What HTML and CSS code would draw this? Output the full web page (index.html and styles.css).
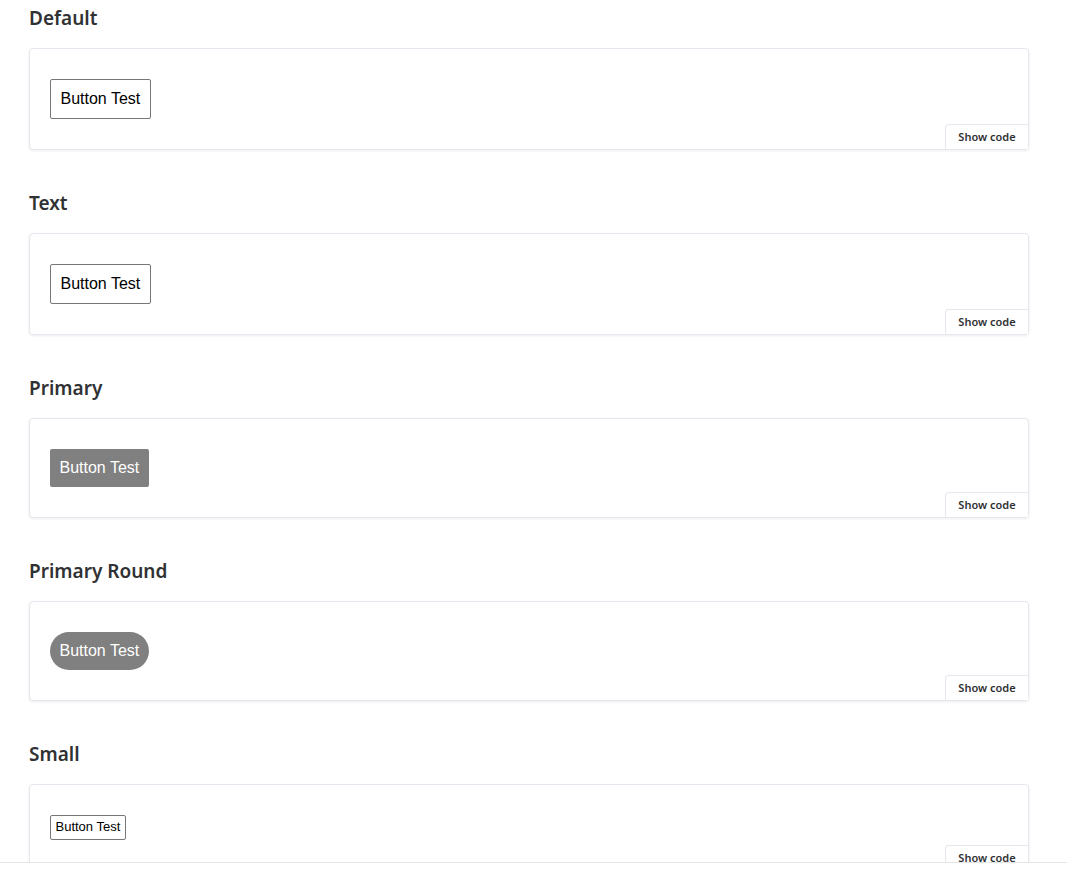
FILE: index.html
```html
<!DOCTYPE html>
<html lang="en">
<head>
<meta charset="utf-8">
<title>Buttons</title>
<link rel="stylesheet" href="styles.css">
</head>
<body>
<div class="page">
  <main class="content">
    <section class="demo">
      <h2 class="demo-title">Default</h2>
      <div class="demo-card">
        <button class="btn">Button Test</button>
        <button class="show-code">Show code</button>
      </div>
    </section>
    <section class="demo">
      <h2 class="demo-title">Text</h2>
      <div class="demo-card">
        <button class="btn">Button Test</button>
        <button class="show-code">Show code</button>
      </div>
    </section>
    <section class="demo">
      <h2 class="demo-title">Primary</h2>
      <div class="demo-card">
        <button class="btn btn-primary">Button Test</button>
        <button class="show-code">Show code</button>
      </div>
    </section>
    <section class="demo">
      <h2 class="demo-title">Primary Round</h2>
      <div class="demo-card">
        <button class="btn btn-primary btn-round">Button Test</button>
        <button class="show-code">Show code</button>
      </div>
    </section>
    <section class="demo">
      <h2 class="demo-title">Small</h2>
      <div class="demo-card">
        <button class="btn btn-small">Button Test</button>
        <button class="show-code">Show code</button>
      </div>
    </section>
  </main>
  <footer class="bottom-bar"></footer>
</div>
</body>
</html>
```

FILE: styles.css
```css
html, body {
  margin: 0;
  padding: 0;
  background: #ffffff;
}

.page {
  display: flex;
  flex-direction: column;
  height: 872px;
  overflow: hidden;
}

.content {
  height: 862px;
  flex: none;
  overflow: hidden;
  padding: 6px 0 0 29px;
  box-sizing: border-box;
}

.bottom-bar {
  flex: 1;
  border-top: 1px solid #e4e4e4;
  background: #ffffff;
}

.demo {
  width: 1000px;
  margin-bottom: 41px;
}

.demo-title {
  margin: 0 0 18px;
  font-family: "Noto Sans", "Open Sans", sans-serif;
  font-weight: 600;
  font-size: 19px;
  line-height: 24px;
  color: #303133;
}

.demo-card {
  position: relative;
  border: 1px solid #e4e7ed;
  border-radius: 4px;
  box-shadow: 0 1px 3px rgba(0, 0, 0, 0.08);
  padding: 30px 20px;
  background: #ffffff;
}

.btn {
  display: inline-block;
  font-family: "Liberation Sans", Arial, sans-serif;
  font-size: 16px;
  line-height: 18px;
  padding: 10px 9.5px;
  border: 1px solid #767676;
  border-radius: 2px;
  background: #ffffff;
  color: #000000;
  margin: 0;
  vertical-align: top;
}

.btn-primary {
  border: none;
  background: #808080;
  color: #ffffff;
}

.btn-round {
  border-radius: 19px;
}

.btn-small {
  font-size: 13px;
  line-height: 16px;
  padding: 3px 4.5px 4px;
}

.show-code {
  position: absolute;
  right: 0;
  bottom: 0;
  width: 83px;
  height: 25px;
  padding: 0 0 2px;
  margin: 0;
  border: none;
  border-top: 1px solid #e4e7ed;
  border-left: 1px solid #e4e7ed;
  border-top-left-radius: 4px;
  background: #ffffff;
  font-family: "Noto Sans", "Open Sans", sans-serif;
  font-size: 11px;
  font-weight: 600;
  color: #303133;
  box-sizing: border-box;
}
```
